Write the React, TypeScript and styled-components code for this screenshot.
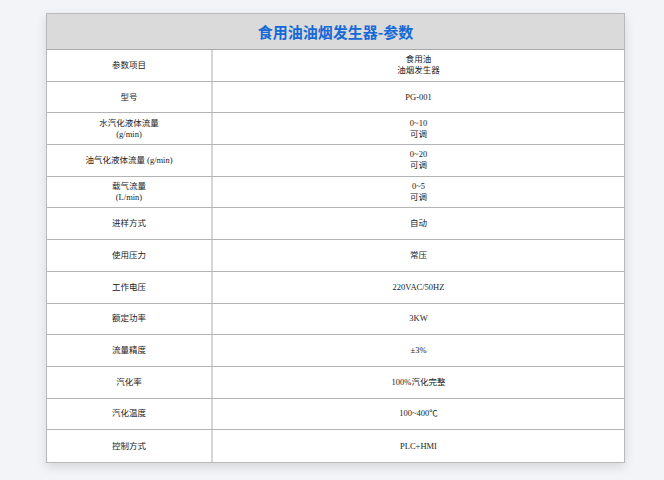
import React from "react";
import styled, { createGlobalStyle } from "styled-components";

const Global = createGlobalStyle`
  html, body { margin: 0; padding: 0; background: #f3f4f7; }
  body { font-family: "Noto Sans CJK SC", "Liberation Sans", sans-serif; }
`;

const Page = styled.div`
  width: 664px; height: 480px; padding: 13px 0 0 46px; box-sizing: border-box;
`;

const Table = styled.div`
  width: 577px; background: #fff; border: 1px solid #b8b8b8;
  box-shadow: 0 4px 10px rgba(0,0,0,0.12);
`;

const Title = styled.div`
  height: 35px; background: #dadada; display: flex; align-items: center; justify-content: center;
  color: #1569d6; font-weight: 700; font-size: 15px; border-bottom: 1px solid #a8a8a8;
`;

const Row = styled.div`
  display: grid; grid-template-columns: 166px 1fr; height: 31.7px; box-sizing: border-box;
  border-bottom: 1px solid #b4b4b4;
  &:last-child { border-bottom: none; }
`;

const Cell = styled.div<{ $left?: boolean }>`
  display: flex; flex-direction: column; align-items: center; justify-content: center;
  font-size: 8.5px; line-height: 11px; color: #222;
  font-family: "Liberation Serif", "Noto Sans CJK SC", serif;
  ${p => p.$left && "border-right: 2px solid #d6d6d6;"}
`;

const rows: [string[], string[]][] = [
  [["参数项目"], ["食用油", "油烟发生器"]],
  [["型号"], ["PG-001"]],
  [["水汽化液体流量", "(g/min)"], ["0~10", "可调"]],
  [["油气化液体流量 (g/min)"], ["0~20", "可调"]],
  [["载气流量", "(L/min)"], ["0~5", "可调"]],
  [["进样方式"], ["自动"]],
  [["使用压力"], ["常压"]],
  [["工作电压"], ["220VAC/50HZ"]],
  [["额定功率"], ["3KW"]],
  [["流量精度"], ["±3%"]],
  [["汽化率"], ["100%汽化完整"]],
  [["汽化温度"], ["100~400℃"]],
  [["控制方式"], ["PLC+HMI"]],
];

export default function App() {
  return (
    <Page>
      <Global />
      <Table>
        <Title>食用油油烟发生器-参数</Title>
        {rows.map(([l, r], i) => (
          <Row key={i}>
            <Cell $left>{l.map((t, j) => <span key={j}>{t}</span>)}</Cell>
            <Cell>{r.map((t, j) => <span key={j}>{t}</span>)}</Cell>
          </Row>
        ))}
      </Table>
    </Page>
  );
}
